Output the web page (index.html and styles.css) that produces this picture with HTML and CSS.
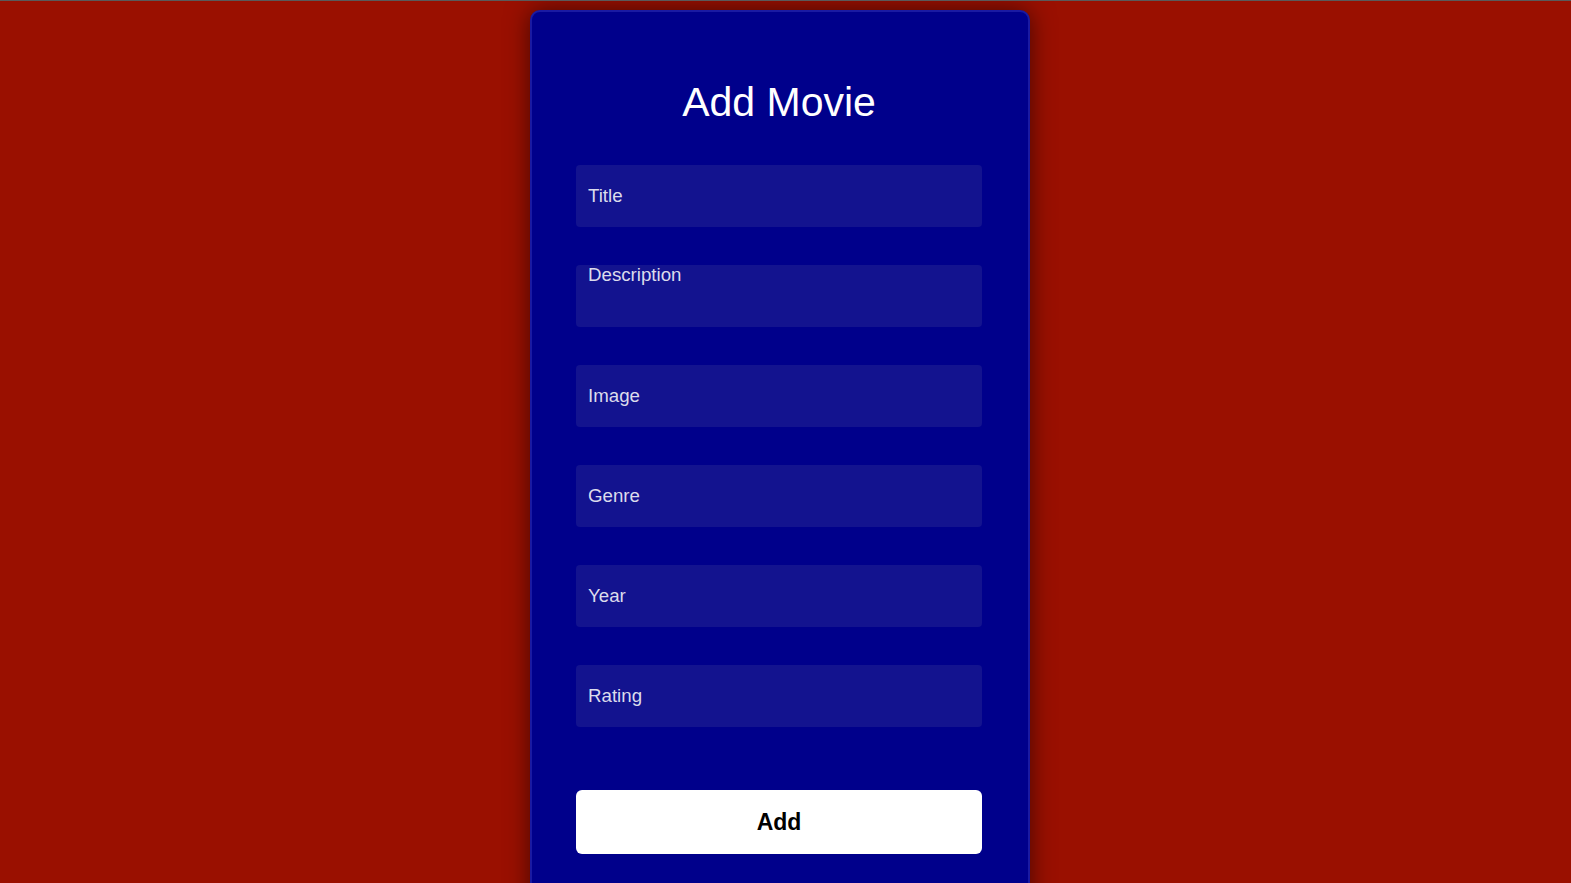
FILE: index.html
```html
<!DOCTYPE html>
<html lang="en">
<head>
<meta charset="utf-8">
<title>Add Movie</title>
<link rel="stylesheet" href="styles.css">
</head>
<body>
<div class="page">
  <form class="card">
    <h1 class="title">Add Movie</h1>
    <input class="field" type="text" placeholder="Title">
    <textarea class="field area" placeholder="Description"></textarea>
    <input class="field" type="text" placeholder="Image">
    <input class="field" type="text" placeholder="Genre">
    <input class="field" type="text" placeholder="Year">
    <input class="field" type="text" placeholder="Rating">
    <button class="btn" type="button">Add</button>
  </form>
</div>
</body>
</html>
```
FILE: styles.css
```css
html, body { margin: 0; padding: 0; }
body {
  background: #9a1000;
  border-top: 1px solid #5a5a5a;
  font-family: "Liberation Sans", Arial, sans-serif;
  height: 882px;
  overflow: hidden;
}
.page {
  display: flex;
  justify-content: center;
  padding-right: 11px;
}
.card {
  box-sizing: border-box;
  width: 500px;
  margin-top: 9px;
  padding: 67px 46px 60px 44px;
  background: #00008b;
  border: 2px solid #1a1aa2;
  border-radius: 10px;
  box-shadow: 0 0 24px rgba(0, 0, 0, 0.55);
  display: flex;
  flex-direction: column;
}
.title {
  margin: 0 0 39px;
  font-size: 41px;
  font-weight: 400;
  color: #ffffff;
  text-align: center;
  line-height: 47px;
}
.field {
  box-sizing: border-box;
  width: 100%;
  height: 62px;
  margin: 0 0 38px;
  padding: 0 12px;
  background: #13138f;
  border: none;
  border-radius: 4px;
  font-family: "Liberation Sans", Arial, sans-serif;
  font-size: 18.7px;
  color: #e4e4f2;
  outline: none;
}
.field::placeholder { color: #dcdcec; opacity: 1; }
.area {
  resize: none;
  padding-top: 0;
  line-height: 20px;
}
.btn {
  margin-top: 25px;
  height: 64px;
  width: 100%;
  background: #ffffff;
  border: none;
  border-radius: 6px;
  font-family: "Liberation Sans", Arial, sans-serif;
  font-size: 23px;
  font-weight: 700;
  color: #000000;
}
```
